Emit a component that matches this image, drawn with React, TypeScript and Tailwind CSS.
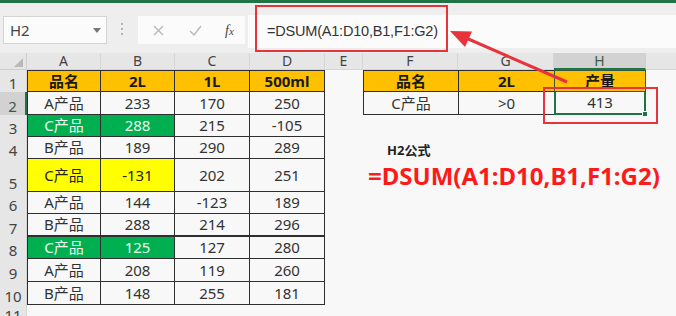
import React from 'react';

type Cell = { v: string; fill?: 'head' | 'green' | 'yellow'; bold?: boolean };

const font = { fontFamily: '"Noto Sans", "Noto Sans CJK SC", sans-serif' };

const cols = ['A', 'B', 'C', 'D', 'E', 'F', 'G', 'H'];

const left: Cell[][] = [
  [
    { v: '品名', fill: 'head', bold: true },
    { v: '2L', fill: 'head', bold: true },
    { v: '1L', fill: 'head', bold: true },
    { v: '500ml', fill: 'head', bold: true },
  ],
  [{ v: 'A产品' }, { v: '233' }, { v: '170' }, { v: '250' }],
  [{ v: 'C产品', fill: 'green' }, { v: '288', fill: 'green' }, { v: '215' }, { v: '-105' }],
  [{ v: 'B产品' }, { v: '189' }, { v: '290' }, { v: '289' }],
  [{ v: 'C产品', fill: 'yellow' }, { v: '-131', fill: 'yellow' }, { v: '202' }, { v: '251' }],
  [{ v: 'A产品' }, { v: '144' }, { v: '-123' }, { v: '189' }],
  [{ v: 'B产品' }, { v: '288' }, { v: '214' }, { v: '296' }],
  [{ v: 'C产品', fill: 'green' }, { v: '125', fill: 'green' }, { v: '127' }, { v: '280' }],
  [{ v: 'A产品' }, { v: '208' }, { v: '119' }, { v: '260' }],
  [{ v: 'B产品' }, { v: '148' }, { v: '255' }, { v: '181' }],
];

const fillClass = (c: Cell) => {
  if (c.fill === 'head') return 'bg-[#ffc000] text-[#1a1a1a]';
  if (c.fill === 'green') return 'bg-[#00b050] text-[#eafaf0]';
  if (c.fill === 'yellow') return 'bg-[#ffff00] text-[#222]';
  return 'text-[#333]';
};

function ToolBar() {
  return (
    <div className="flex h-[50px] items-start bg-[#eeeeee]">
      {/* name box */}
      <div className="ml-[3px] mt-[13px] flex h-[28px] w-[104px] items-center justify-between border border-[#d4d4d4] bg-[#fbfbfb] pl-[6px] pr-[5px]">
        <span className="text-[15px] text-[#444]">H2</span>
        <svg width="8" height="5" viewBox="0 0 8 5">
          <path d="M0 0h8L4 5z" fill="#777" />
        </svg>
      </div>
      <div className="ml-[14px] mt-[20px] flex flex-col gap-[3px]">
        <span className="h-[2px] w-[2px] bg-[#b5b5b5]" />
        <span className="h-[2px] w-[2px] bg-[#b5b5b5]" />
        <span className="h-[2px] w-[2px] bg-[#b5b5b5]" />
      </div>
      {/* cancel / enter / fx */}
      <div className="ml-[15px] mt-[13px] flex h-[28px] w-[107px] items-center bg-[#fbfbfb]">
        <svg className="ml-[15px]" width="11" height="11" viewBox="0 0 11 11">
          <path d="M1 1l9 9M10 1l-9 9" stroke="#b8b8b8" strokeWidth="1.4" />
        </svg>
        <svg className="ml-[25px]" width="13" height="11" viewBox="0 0 13 11">
          <path d="M1 6l4 4 7-9" stroke="#b8b8b8" strokeWidth="1.4" fill="none" />
        </svg>
        <span className="ml-[23px] text-[14px] italic text-[#444]" style={{ fontFamily: '"Liberation Serif", serif' }}>
          f<span className="text-[11px]">x</span>
        </span>
      </div>
      {/* formula input */}
      <div className="ml-[3px] mt-[12px] flex h-[33px] flex-1 items-center bg-[#fbfbfb] pl-[19px]">
        <span className="text-[14.5px] tracking-[-0.2px] text-[#333]" style={{ fontFamily: '"Liberation Sans", "Noto Sans CJK SC", sans-serif' }}>
          =DSUM(A1:D10,B1,F1:G2)
        </span>
      </div>
    </div>
  );
}

function Sheet() {
  return (
    <div className="grid h-[263px] grid-cols-[27px_74px_74px_75px_75px_38px_95px_96px_92px_1fr] grid-rows-[17px_22px_23px_22px_22px_33px_22px_23px_22px_23px_23px_1fr] bg-[#f8f8f8]">
      {/* column headers */}
      <div className="relative border-b border-r border-[#cfcfcf] bg-[#e6e6e6]">
        <svg className="absolute bottom-[2px] right-[3px]" width="9" height="9" viewBox="0 0 9 9">
          <path d="M9 0v9H0z" fill="#b9b9b9" />
        </svg>
      </div>
      {cols.map((c) => (
        <div
          key={c}
          className={
            c === 'H'
              ? 'flex items-center justify-center border-b-2 border-r border-b-[#217346] border-r-[#cfcfcf] bg-[#d2d2d2] text-[14px] leading-none text-[#3c5a46]'
              : 'flex items-center justify-center border-b border-r border-[#d6d6d6] bg-[#e6e6e6] text-[14px] leading-none text-[#444]'
          }
        >
          {c}
        </div>
      ))}
      <div className="border-b border-[#d6d6d6] bg-[#e6e6e6]" />

      {/* rows 1-10 */}
      {left.map((row, i) => {
        const r = i + 1;
        const rowBottom = r === 7 ? 'border-b-2' : 'border-b';
        return (
          <React.Fragment key={r}>
            <div
              className={
                r === 2
                  ? 'flex items-end justify-center border-r-2 border-r-[#217346] bg-[#d2d2d2] pb-[1px] text-[15px] leading-none text-[#3c5a46]'
                  : 'flex items-end justify-center border-r border-[#d6d6d6] bg-[#e6e6e6] pb-[1px] text-[15px] leading-none text-[#444]'
              }
            >
              {r}
            </div>
            {row.map((c, j) => (
              <div
                key={j}
                className={`flex items-center justify-center border-r ${rowBottom} border-[#2f2f2f] text-[15px] leading-none ${
                  j === 0 ? 'border-l' : ''
                } ${r === 1 ? 'border-t' : ''} ${c.bold ? 'font-bold' : ''} ${fillClass(c)}`}
              >
                {c.v}
              </div>
            ))}
            <div />
            {r === 1 && (
              <>
                <div className="flex items-center justify-center border border-r-0 border-[#2f2f2f] bg-[#ffc000] text-[15px] font-bold leading-none text-[#1a1a1a]">
                  品名
                </div>
                <div className="flex items-center justify-center border border-r-0 border-[#2f2f2f] bg-[#ffc000] text-[15px] font-bold leading-none text-[#1a1a1a]">
                  2L
                </div>
                <div className="flex items-center justify-center border border-[#2f5a3e] bg-[#ffc000] text-[15px] font-bold leading-none text-[#1a1a1a]">
                  产量
                </div>
                <div />
              </>
            )}
            {r === 2 && (
              <>
                <div className="flex items-center justify-center border-b border-l border-[#2f2f2f] text-[15px] leading-none text-[#333]">
                  C产品
                </div>
                <div className="flex items-center justify-center border-b border-l border-[#2f2f2f] text-[15px] leading-none text-[#333]">
                  &gt;0
                </div>
                <div className="relative flex items-center justify-center border-2 border-t-0 border-[#217346] text-[15px] leading-none text-[#333]">
                  413
                  <span className="absolute -bottom-[4px] -right-[4px] h-[6px] w-[6px] border border-white bg-[#217346]" />
                </div>
                <div />
              </>
            )}
            {r === 4 && (
              <div className="col-span-4 row-span-3 pl-[24px] pt-[4px]">
                <div className="text-[13px] font-bold leading-[18px] text-[#222]">H2公式</div>
                <div className="-ml-[19px] mt-[2px] whitespace-nowrap text-[24px] font-bold leading-[30px] text-[#ff1a1a]">
                  =DSUM(A1:D10,B1,F1:G2)
                </div>
              </div>
            )}
            {r !== 1 && r !== 2 && !(r >= 4 && r <= 6) && (
              <>
                <div />
                <div />
                <div />
                <div />
              </>
            )}
          </React.Fragment>
        );
      })}
      <div className="flex items-start justify-center overflow-hidden border-r border-[#d6d6d6] bg-[#e6e6e6] pt-[3px] text-[15px] leading-none text-[#444]">
        11
      </div>
    </div>
  );
}

export default function App() {
  return (
    <div className="relative h-[316px] w-[676px] overflow-hidden bg-[#f8f8f8]" style={font}>
      <div className="h-[3px] bg-[#217346]" />
      <ToolBar />
      <Sheet />

      {/* callouts drawn over the sheet */}
      <div className="absolute left-[255px] top-[5px] h-[47px] w-[193px] border-2 border-[#e8323c]" />
      <div className="absolute left-[543px] top-[87px] h-[37px] w-[115px] border-[2.5px] border-[#e8323c]" />
      <svg className="pointer-events-none absolute left-0 top-0" width="676" height="316">
        <line x1="567" y1="82" x2="466" y2="38" stroke="#e8323c" strokeWidth="3" />
        <path d="M450 31 L472 31.5 L465 47 Z" fill="#e8323c" />
      </svg>
    </div>
  );
}
